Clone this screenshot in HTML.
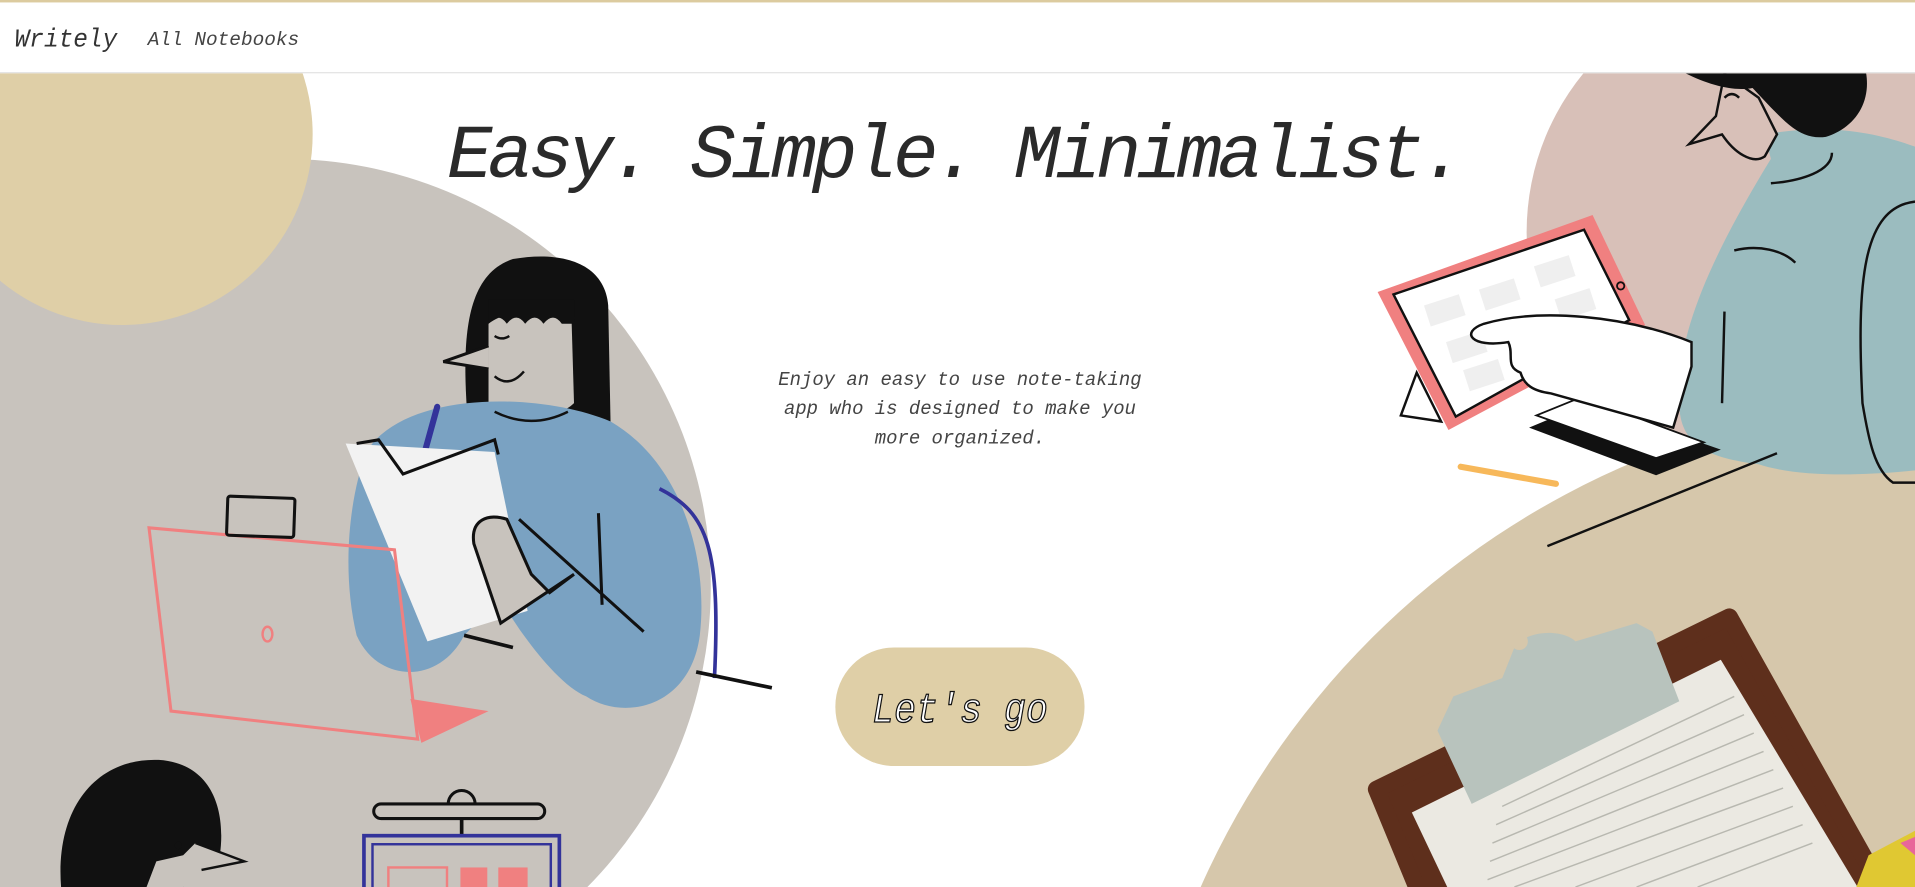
<!DOCTYPE html>
<html><head><meta charset="utf-8"><style>
html,body{margin:0;padding:0;width:1915px;height:887px;overflow:hidden;background:#fff}
svg{display:block;position:absolute;left:0;top:0}
</style></head><body>
<svg width="1915" height="887" viewBox="0 0 1568 726" preserveAspectRatio="none" xmlns="http://www.w3.org/2000/svg">
<defs><clipPath id="c"><rect x="0" y="60" width="1568" height="666"/></clipPath></defs>
<rect width="1568" height="726" fill="#fff"/>
<g clip-path="url(#c)">
<circle cx="232" cy="480" r="350" fill="#c8c3bd"/>
<circle cx="100" cy="110" r="156" fill="#dfcfa7"/>
<circle cx="1455" cy="190" r="205" fill="#d8c0b8"/>
<circle cx="1600" cy="1000" r="675" fill="#d6c7ab"/>

<!-- left woman -->
<path d="M383 345 C378 280 380 225 420 212 C460 205 495 215 498 250 L500 350 Z" fill="#111"/>
<path d="M400 265 C420 250 450 255 468 262 L470 330 C455 345 415 345 400 330 Z" fill="#c8c3bd"/>
<path d="M400 265 q8 -10 15 0 q8 -10 15 0 q8 -10 15 0 q8 -10 15 0 l10 0 l0 -20 l-70 0 Z" fill="#111"/>
<path d="M400 283 L363 296 L400 302" fill="#c8c3bd" stroke="#111" stroke-width="2.5"/>
<path d="M405 308 q12 10 24 -4" fill="none" stroke="#111" stroke-width="2"/>
<path d="M405 275 q6 4 12 0" fill="none" stroke="#111" stroke-width="2"/>
<path d="M300 370 C330 320 440 320 500 345 C560 380 580 460 573 520 C565 580 510 590 480 570 C455 560 420 510 410 490 L380 520 C360 560 310 560 292 520 C280 470 285 410 300 370 Z" fill="#7aa2c2"/>
<path d="M405 337 q30 15 60 0" fill="none" stroke="#111" stroke-width="2"/>
<path d="M540 400 C580 420 590 450 585 555" fill="none" stroke="#33339a" stroke-width="3"/>
<path d="M570 550 L632 563" stroke="#111" stroke-width="3"/>
<path d="M380 520 L420 530" stroke="#111" stroke-width="3"/>
<path d="M345 380 L358 333" stroke="#33339a" stroke-width="5" stroke-linecap="round"/>
<path d="M283 363 L405 370 L432 500 L350 525 Z" fill="#f2f2f2"/>
<path d="M292 363 L310 360 L330 388 L405 360 L408 372" fill="none" stroke="#111" stroke-width="2.5"/>
<path d="M388 445 C385 425 400 420 415 425 L435 470 L450 485 L470 470 L410 510 Z" fill="#c8c3bd" stroke="#111" stroke-width="2.5"/>
<path d="M425 425 L527 517 M490 420 L493 495" stroke="#111" stroke-width="2.5"/>
<path d="M122 432 L323 450 L342 605 L140 582 Z" fill="none" stroke="#f08080" stroke-width="2.5"/>
<path d="M336 572 L400 582 L345 608 Z" fill="#f08080"/>
<ellipse cx="219" cy="519" rx="4" ry="6" fill="none" stroke="#f08080" stroke-width="2"/>
<rect x="186" y="407" width="55" height="32" rx="2" fill="none" stroke="#111" stroke-width="2.5" transform="rotate(2 213 423)"/>
<path d="M50 726 C45 660 80 620 130 622 C175 625 185 665 180 700 L160 700 L150 726 Z" fill="#111"/>
<path d="M128 705 L150 700 L160 690 L200 705 L160 715 L150 726 L120 726 Z" fill="#c8c3bd"/>
<path d="M160 690 L200 705 L165 712" fill="none" stroke="#111" stroke-width="2"/>
<circle cx="146" cy="692" r="3" fill="#111"/>
<rect x="306" y="658" width="140" height="12" rx="6" fill="none" stroke="#111" stroke-width="2.5"/>
<path d="M367 658 a11 11 0 0 1 22 0" fill="none" stroke="#111" stroke-width="2.5"/>
<path d="M378 670 L378 684" stroke="#111" stroke-width="3"/>
<rect x="298" y="684" width="160" height="50" fill="none" stroke="#33339a" stroke-width="3"/>
<rect x="305" y="691" width="146" height="40" fill="none" stroke="#33339a" stroke-width="2"/>
<rect x="318" y="710" width="48" height="20" fill="none" stroke="#f08080" stroke-width="2"/>
<rect x="377" y="710" width="22" height="20" fill="#f08080"/>
<rect x="408" y="710" width="24" height="20" fill="#f08080"/>

<!-- right man -->
<path d="M1445 110 C1500 100 1540 110 1568 120 L1568 385 C1520 390 1470 390 1440 380 C1400 375 1375 365 1375 330 C1372 280 1395 220 1450 130 Z" fill="#9bbcbf"/>
<path d="M1412 60 L1405 95 L1383 118 L1410 110 C1420 125 1435 135 1445 128 L1455 110 L1440 80 Z" fill="#d8c0b8" stroke="#111" stroke-width="2"/>
<path d="M1380 60 L1528 60 C1532 85 1518 105 1495 112 C1475 115 1462 100 1450 88 L1435 72 C1420 75 1400 70 1380 60 Z" fill="#111"/>
<path d="M1412 80 q6 -6 12 0" fill="none" stroke="#111" stroke-width="2"/>
<path d="M1450 150 C1475 148 1500 140 1500 125 M1420 205 C1440 200 1460 205 1470 215 M1410 330 L1412 255 M1568 165 C1525 170 1520 230 1525 330 C1530 360 1535 385 1550 395 L1568 395" fill="none" stroke="#111" stroke-width="2"/>
<path d="M1147 340 L1160 305 L1180 345 Z" fill="#fff" stroke="#111" stroke-width="2"/>
<path d="M1252 350 L1356 389 L1409 368 L1300 330 Z" fill="#111"/>
<path d="M1258 340 L1356 375 L1395 362 L1295 325 Z" fill="#fff" stroke="#111" stroke-width="1.5"/>
<path d="M1128 239 L1304 176 L1347 266 L1186 352 Z" fill="#f08080"/>
<path d="M1141 241 L1297 188 L1334 262 L1192 341 Z" fill="#fff" stroke="#111" stroke-width="2"/>
<g fill="#efefef"><rect x="1168" y="245" width="30" height="18" transform="rotate(-18 1183 254)"/><rect x="1213" y="232" width="30" height="18" transform="rotate(-18 1228 241)"/><rect x="1258" y="213" width="30" height="18" transform="rotate(-18 1273 222)"/><rect x="1186" y="275" width="30" height="18" transform="rotate(-18 1201 284)"/><rect x="1200" y="298" width="30" height="18" transform="rotate(-18 1215 307)"/><rect x="1275" y="240" width="30" height="18" transform="rotate(-18 1290 249)"/></g>
<circle cx="1327" cy="234" r="3" fill="none" stroke="#111" stroke-width="1.5"/>
<path d="M1385 280 C1330 258 1260 252 1215 265 C1195 272 1205 285 1235 280 C1240 290 1232 300 1245 305 C1248 315 1255 320 1270 322 L1370 350 L1385 300 Z" fill="#fff" stroke="#111" stroke-width="2"/>
<path d="M1196 382 L1274 396" stroke="#f7b85a" stroke-width="5" stroke-linecap="round"/>
<path d="M1267 447 L1455 371" stroke="#111" stroke-width="2"/>
<path d="M1127 646 L1416 505 L1540 726 L1160 726 Z" fill="#5e2f1c" stroke="#5e2f1c" stroke-width="14" stroke-linejoin="round"/>
<path d="M1156 665 L1409 540 L1521 726 L1185 726 Z" fill="#ebe9e2"/>
<g stroke="#b8b8b0" stroke-width="1.2"><path d="M1230 660 L1420 570"/><path d="M1225 675 L1428 585"/><path d="M1222 690 L1436 600"/><path d="M1220 705 L1444 615"/><path d="M1218 720 L1452 630"/><path d="M1240 726 L1460 645"/><path d="M1290 726 L1468 660"/><path d="M1340 726 L1476 675"/><path d="M1390 726 L1484 690"/></g>
<path d="M1177 598 L1190 570 L1230 555 L1240 530 C1250 515 1280 515 1290 525 L1340 510 L1353 517 L1375 574 L1205 658 Z" fill="#b8c3bd"/>
<circle cx="1244" cy="525" r="7" fill="#d6c7ab"/>
<path d="M1530 700 L1568 680 L1568 726 L1520 726 Z" fill="#e0c832"/>
<path d="M1556 690 L1568 685 L1568 700 Z" fill="#e8669a"/>
</g>
<rect x="0" y="0" width="1568" height="59" fill="#fff"/>
<rect x="0" y="0" width="1568" height="2" fill="#dccb9f"/>
<rect x="0" y="59" width="1568" height="1" fill="#e3e3e3"/>
<text x="12" y="38" font-family="Liberation Mono, monospace" font-style="italic" font-size="21" fill="#333" textLength="84" lengthAdjust="spacingAndGlyphs">Writely</text>
<text x="121" y="37" font-family="Liberation Mono, monospace" font-style="italic" font-size="16" fill="#444" textLength="124" lengthAdjust="spacingAndGlyphs">All Notebooks</text>
<text x="366" y="145" font-family="Liberation Mono, monospace" font-style="italic" font-size="62" fill="#2a2a2a" textLength="834" lengthAdjust="spacing">Easy. Simple. Minimalist.</text>
<g font-family="Liberation Mono, monospace" font-style="italic" font-size="15.5" fill="#444" text-anchor="middle">
<text x="786" y="315">Enjoy an easy to use note-taking</text>
<text x="786" y="339">app who is designed to make you</text>
<text x="786" y="363">more organized.</text>
</g>
<rect x="684" y="530" width="204" height="97" rx="48" fill="#dfcfa7"/>
<text x="714" y="591" font-family="Liberation Mono, monospace" font-style="italic" font-size="34" fill="#fff" stroke="#111" stroke-width="1.1" textLength="144" lengthAdjust="spacingAndGlyphs">Let's go</text>
</svg>
</body></html>
